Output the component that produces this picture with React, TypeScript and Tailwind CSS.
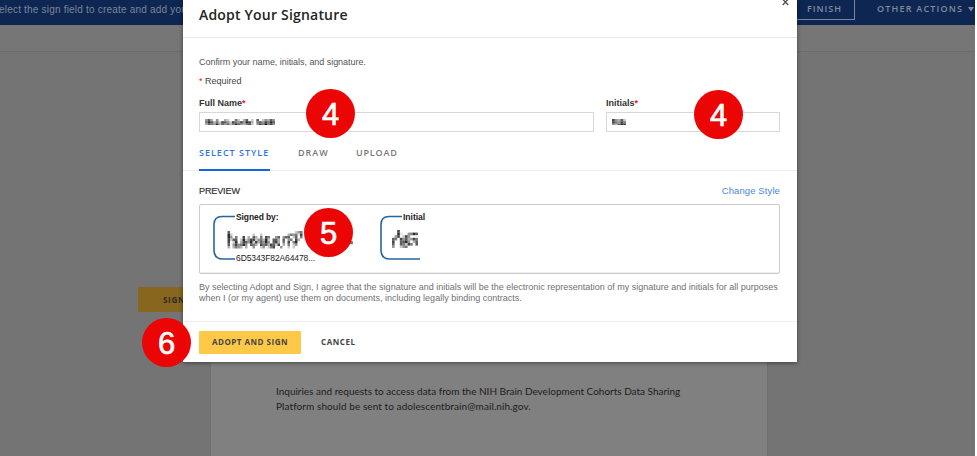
import React from "react";

const NAME_FIELD = [
  "46304003200520360206024364",
  "58635276427547487305647586",
  "36548364635864357204759574",
];

const INITIAL_FIELD = ["74362", "75475", "43687"];

const SIGNATURE = [
  "06000000000000000000000000002450000",
  "08200000000200200000000003545170000",
  "08405007030630507500460466026050000",
  "07266028247724538206630604507300000",
  "07028037648273648406730507058000000",
  "06047458406530756376270305024000000",
  "03035430300400240257004002020000000",
];

const INITIALS = [
  "0070000000",
  "0081004586",
  "0470274000",
  "6507463475",
  "7006684036",
  "6006527506",
  "4002450000",
];

function Mosaic({ rows, cell, height = cell }: { rows: string[]; cell: number; height?: number }) {
  const width = rows[0].length * cell;
  return (
    <svg width={width} height={rows.length * height} className="block shrink-0" aria-hidden="true">
      {rows.map((row, y) =>
        row.split("").map((v, x) =>
          v === "0" ? null : (
            <rect key={`${x}-${y}`} x={x * cell} y={y * height} width={cell} height={height} fill="#111" opacity={Number(v) / 9} />
          ),
        ),
      )}
    </svg>
  );
}

function Step({ n, place }: { n: number; place: string }) {
  return (
    <div
      className={`absolute flex size-[49px] items-center justify-center rounded-full bg-[#eb0505] pt-[1px] font-['Liberation_Sans',Arial,sans-serif] text-[31px] leading-none text-white [-webkit-text-stroke:0.7px_white] ${place}`}
    >
      {n}
    </div>
  );
}

function Field({ label, width, children }: { label: string; width: string; children: React.ReactNode }) {
  return (
    <div className={width}>
      <div className="h-[15px] text-[9px] leading-[13px] font-bold text-[#333]">
        {label}
        <span className="text-[#e02020]">*</span>
      </div>
      <div className="flex h-5 items-center border border-[#d8d8d8] pl-[5px]">{children}</div>
    </div>
  );
}

function Backdrop() {
  return (
    <div className="flex h-full w-[975px] flex-col overflow-hidden bg-[#747474]">
      <div className="flex h-[25px] shrink-0 items-start justify-between bg-[#0d2652]">
        <p className="-ml-[1px] pt-[3px] font-['Liberation_Sans',Arial,sans-serif] text-[10px] leading-[14px] tracking-[0.2px] whitespace-nowrap text-[#7c8798]">
          elect the sign field to create and add you
        </p>
        <div className="flex font-['Open_Sans',sans-serif] text-[9px] leading-[14px] font-semibold tracking-[1.2px] text-[#818b9c]">
          <div className="h-5 w-[65px] border-r border-b border-[#7c8798] pt-[2px] pl-[17px] tracking-[1px]">FINISH</div>
          <div className="flex w-[120px] pt-[2px] pl-[22px] whitespace-nowrap">
            OTHER ACTIONS
            <svg width="6" height="5" viewBox="0 0 6 5" className="mt-[5px] ml-[5px] shrink-0">
              <path d="M0 0H6L3 4.5Z" fill="#818b9c" />
            </svg>
          </div>
        </div>
      </div>
      <div className="h-[27px] shrink-0 border-b border-[#6c6c6c] bg-[#767676]" />
      <div className="flex flex-1">
        <div className="w-[210px] pt-[235px] pl-[138px]">
          <div className="h-[25px] rounded-[1px] bg-[#87661f] pl-[25px] font-['Open_Sans',sans-serif] text-[8px] leading-[25px] font-bold tracking-[0.7px] text-[#302c25]">
            SIGN
          </div>
        </div>
        <div className="w-[558px] border-x border-[#707070] bg-[#808080] pt-[332px] pl-[65px] font-['Lato',sans-serif] text-[10px] leading-[14.5px] whitespace-nowrap text-[#1d1d1d]">
          <p className="tracking-[-0.01px]">Inquiries and requests to access data from the NIH Brain Development Cohorts Data Sharing</p>
          <p className="tracking-[0.08px]">Platform should be sent to adolescentbrain@mail.nih.gov.</p>
        </div>
      </div>
    </div>
  );
}

export default function App() {
  return (
    <div className="relative h-[456px] w-[977px] overflow-hidden bg-white">
      <Backdrop />
      <div className="absolute top-0 left-[183px] flex h-[362px] w-[614px] flex-col bg-white font-['Liberation_Sans',Arial,sans-serif] shadow-[0_1px_4px_rgba(0,0,0,0.45)]">
        <header className="flex h-[38px] shrink-0 justify-between border-b border-[#e9e9e9] pr-[8px] pl-[16px]">
          <h1 className="pt-[5px] font-['Open_Sans',sans-serif] text-[14px] leading-5 font-semibold tracking-[0.2px] text-[#242424]">
            Adopt Your Signature
          </h1>
          <svg width="7" height="7" viewBox="0 0 7 7" className="-mt-[1px]">
            <path d="M.7.2 6.2 6M6.2.2.7 6" stroke="#555" strokeWidth="1.4" fill="none" />
          </svg>
        </header>
        <div className="flex h-[132px] shrink-0 flex-col px-[16px] pt-[18px]">
          <p className="text-[9px] leading-[13px] tracking-[-0.04px] text-[#555]">Confirm your name, initials, and signature.</p>
          <p className="mt-[6px] text-[9px] leading-[13px] text-[#444]">
            <span className="text-[#e02020]">*</span> Required
          </p>
          <div className="mt-[9px] flex gap-3">
            <Field label="Full Name" width="w-[395px]">
              <Mosaic rows={NAME_FIELD} cell={2.7} height={2.2} />
            </Field>
            <Field label="Initials" width="w-[174px]">
              <Mosaic rows={INITIAL_FIELD} cell={2.8} height={2.3} />
            </Field>
          </div>
        </div>
        <nav className="-mt-[30px] flex h-[31px] shrink-0 border-b border-[#eeeeee] pl-[16px] font-['Open_Sans',sans-serif] text-[9px] leading-[13px] font-semibold tracking-[1px] text-[#777]">
          <div className="z-10 h-[31px] w-[71px] border-b-2 border-[#1664df] pt-[6px] whitespace-nowrap text-[#3374df]">SELECT STYLE</div>
          <div className="w-[58px] pt-[6px] pl-[28px]">DRAW</div>
          <div className="pt-[6px] pl-[28px] tracking-[0.8px]">UPLOAD</div>
        </nav>
        <section className="flex h-[151px] shrink-0 flex-col border-b border-[#eeeeee] pt-[13px] pr-[17px] pl-[16px]">
          <div className="flex h-5 justify-between text-[9px] leading-[14px]">
            <h2 className="tracking-[-0.1px] text-[#333] [-webkit-text-stroke:0.2px_#333]">PREVIEW</h2>
            <span className="text-[9.5px] tracking-[0.1px] text-[#4b86de]">Change Style</span>
          </div>
          <div className="flex h-[70px] shrink-0 rounded-[2px] border border-[#cccccc] pt-[6px] pl-[12px] shadow-[inset_0_-1px_1px_#eee]">
            <div className="flex w-[167px]">
              <svg width="24" height="52" viewBox="0 0 24 52" fill="none" className="shrink-0">
                <path d="M23 5.5H10Q2 5.5 2 13.5V39Q2 48 11 48H23" stroke="#2566a0" strokeWidth="1.6" />
              </svg>
              <div className="flex flex-col">
                <div className="text-[8.5px] leading-[12px] font-bold tracking-[-0.1px] text-[#222]">Signed by:</div>
                <div className="-ml-[11px] flex h-[30px] pt-[8px]">
                  <Mosaic rows={SIGNATURE} cell={2.5} />
                  <span className="mt-[10px] ml-[35px] h-[3px] w-[5px] rotate-12 bg-[#777]" />
                </div>
                <div className="-mt-[1px] text-[8.5px] leading-[12px] tracking-[-0.1px] whitespace-nowrap text-[#222]">6D5343F82A64478...</div>
              </div>
            </div>
            <div className="flex">
              <svg width="42" height="52" viewBox="0 0 42 52" fill="none" className="shrink-0">
                <path d="M23 5.5H10Q2 5.5 2 13.5V39Q2 48 11 48H41" stroke="#2566a0" strokeWidth="1.6" />
              </svg>
              <div className="-ml-[18px]">
                <div className="text-[8.5px] leading-[12px] font-bold text-[#222]">Initial</div>
                <div className="-ml-[11px] pt-[7px]">
                  <Mosaic rows={INITIALS} cell={2.6} />
                </div>
              </div>
            </div>
          </div>
          <p className="mt-[8px] text-[9px] leading-[10.5px] whitespace-nowrap text-[#707070]">
            By selecting Adopt and Sign, I agree that the signature and initials will be the electronic representation of my signature and initials for all purposes
            <br />
            when I (or my agent) use them on documents, including legally binding contracts.
          </p>
        </section>
        <footer className="flex flex-1 items-center pl-[16px] font-['Open_Sans',sans-serif] text-[8px] font-bold tracking-[0.8px] text-[#444]">
          <div className="flex h-[23px] w-[102px] items-center justify-center rounded-[1px] bg-[#ffc947] tracking-[0.5px] whitespace-nowrap">ADOPT AND SIGN</div>
          <div className="ml-[20px] tracking-[0.55px]">CANCEL</div>
        </footer>
      </div>
      <Step n={4} place="top-[89px] left-[306px]" />
      <Step n={4} place="top-[90px] left-[694px]" />
      <Step n={5} place="top-[208px] left-[304px]" />
      <Step n={6} place="top-[318px] left-[142px]" />
    </div>
  );
}
